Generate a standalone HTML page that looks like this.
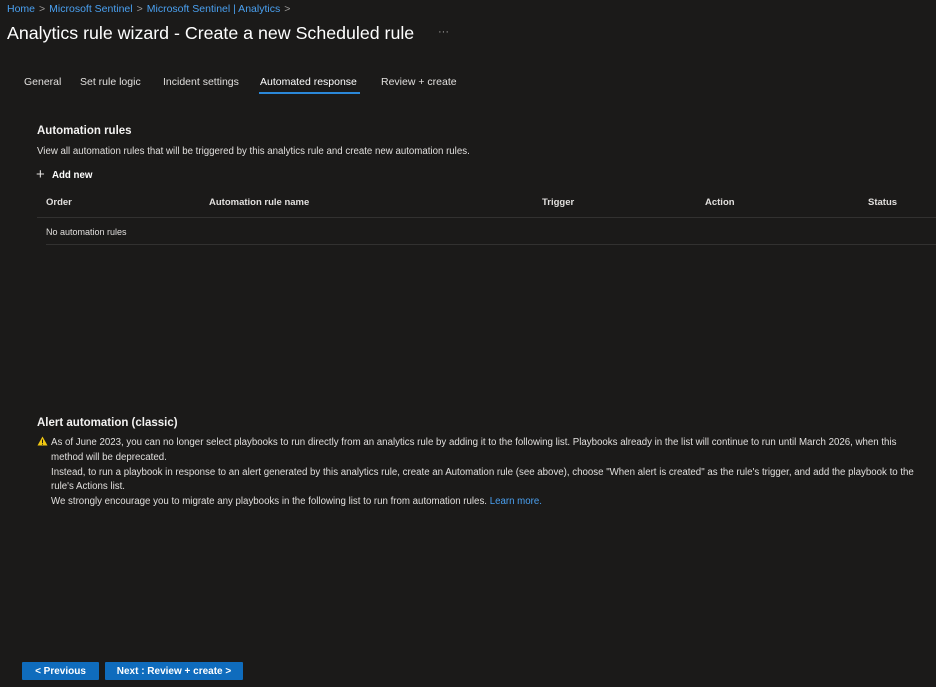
<!DOCTYPE html>
<html><head><meta charset="utf-8"><style>
body{margin:0;width:936px;height:687px;background:#1b1a19;font-family:"Liberation Sans",sans-serif;color:#f3f2f1;position:relative;overflow:hidden}
.a{position:absolute;white-space:nowrap}
.bc{top:3px;left:7px;font-size:10.5px;color:#4aa0f0}
.bc span{color:#a19f9d;margin:0 4px}
.t{top:23px;left:7px;font-size:17.8px;color:#fff}
.tab{top:76px;font-size:10.5px;color:#e1dfdd}
.h{font-size:11.5px;font-weight:bold;color:#f3f2f1}
.s{font-size:9.7px;color:#e1dfdd}
.th{top:197px;font-size:9.5px;font-weight:bold}
.btn{position:absolute;top:662px;height:18px;background:#0f6cbd;color:#fff;font-size:10px;font-weight:bold;text-align:center;line-height:19px;border-radius:1px}
</style></head><body>
<div class="a bc">Home<span>&gt;</span>Microsoft Sentinel<span>&gt;</span>Microsoft Sentinel | Analytics<span>&gt;</span></div>
<div class="a t">Analytics rule wizard - Create a new Scheduled rule</div>
<div class="a" style="top:26px;left:438px;font-size:11px;color:#a19f9d">···</div>
<div class="a tab" style="left:24px">General</div>
<div class="a tab" style="left:80px">Set rule logic</div>
<div class="a tab" style="left:163px">Incident settings</div>
<div class="a tab" style="left:260px;color:#fff">Automated response</div>
<div class="a" style="top:92px;left:259px;width:101px;height:2px;background:#2b88d8"></div>
<div class="a tab" style="left:381px">Review + create</div>
<div class="a h" style="top:125px;left:37px">Automation rules</div>
<div class="a s" style="top:146px;left:37px">View all automation rules that will be triggered by this analytics rule and create new automation rules.</div>
<div class="a" style="top:167px;left:36px;font-size:15px;color:#e1dfdd;line-height:15px">+</div>
<div class="a s" style="top:170px;left:52px;font-weight:bold;color:#fff">Add new</div>
<div class="a s th" style="left:46px">Order</div>
<div class="a s th" style="left:209px">Automation rule name</div>
<div class="a s th" style="left:542px">Trigger</div>
<div class="a s th" style="left:705px">Action</div>
<div class="a s th" style="left:868px">Status</div>
<div class="a" style="top:217px;left:37px;width:899px;height:1px;background:#323130"></div>
<div class="a s" style="top:227px;left:46px;font-size:9px">No automation rules</div>
<div class="a" style="top:244px;left:46px;width:890px;height:1px;background:#323130"></div>
<div class="a h" style="top:417px;left:37px">Alert automation (classic)</div>
<svg class="a" style="top:436px;left:37px" width="11" height="10" viewBox="0 0 11 10"><path d="M5.5 0.5L10.5 9.5H0.5Z" fill="#f2c811"/><rect x="5" y="3.5" width="1" height="3.5" fill="#1b1a19"/><rect x="5" y="7.7" width="1" height="1" fill="#1b1a19"/></svg>
<div class="a s" style="top:436px;left:51px;line-height:14.8px">As of June 2023, you can no longer select playbooks to run directly from an analytics rule by adding it to the following list. Playbooks already in the list will continue to run until March 2026, when this<br>method will be deprecated.<br>Instead, to run a playbook in response to an alert generated by this analytics rule, create an Automation rule (see above), choose "When alert is created" as the rule's trigger, and add the playbook to the<br>rule's Actions list.<br>We strongly encourage you to migrate any playbooks in the following list to run from automation rules. <span style="color:#4aa0f0">Learn more.</span></div>
<div class="btn" style="left:22px;width:77px">&lt; Previous</div>
<div class="btn" style="left:105px;width:138px">Next : Review + create &gt;</div>
</body></html>
